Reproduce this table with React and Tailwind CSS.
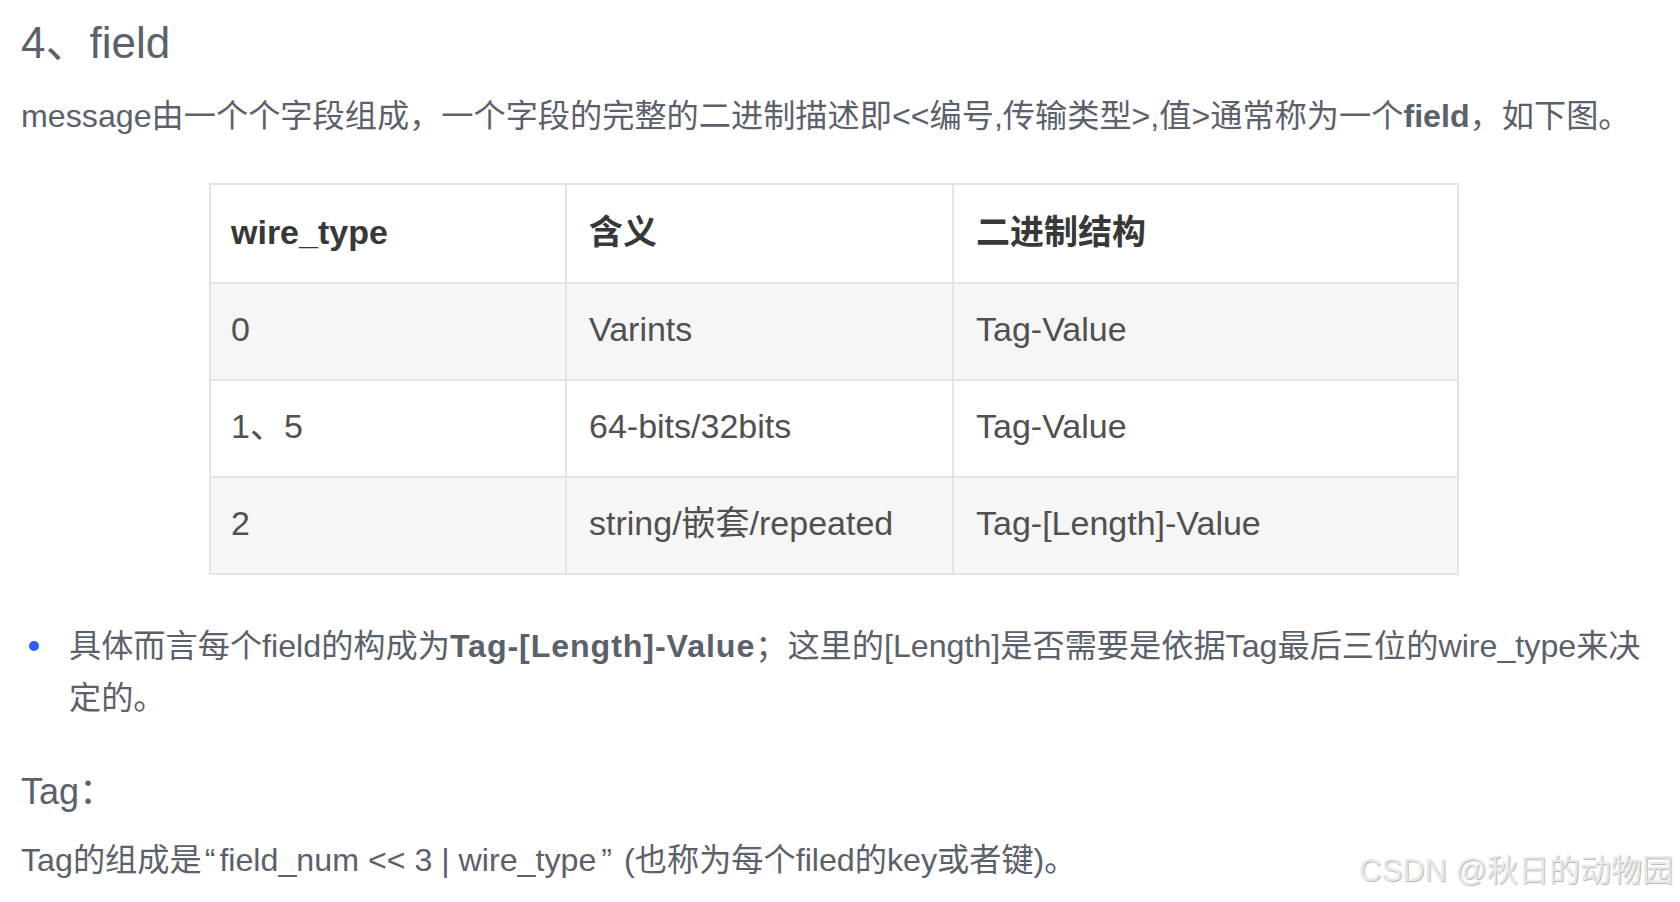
const rows = [
  { type: "0", meaning: "Varints", struct: "Tag-Value" },
  { type: "1、5", meaning: "64-bits/32bits", struct: "Tag-Value" },
  { type: "2", meaning: "string/嵌套/repeated", struct: "Tag-[Length]-Value" },
];

const sans = "font-['Liberation_Sans','Noto_Sans_CJK_SC',sans-serif]";

const App = () => {
  return (
    <div className={`relative min-h-[902px] bg-white text-[#5b616b] ${sans}`}>
      <div className="px-[21px] pt-[13px]">
        <h1 className="text-[44px] leading-[60px] font-normal">4、field</h1>

        <p className="mt-[17px] text-[32.2px] leading-[52px]">
          message由一个个字段组成，一个字段的完整的二进制描述即&lt;&lt;编号,传输类型&gt;,值&gt;通常称为一个
          <b className="font-bold">field</b>，如下图。
        </p>

        <table className="mt-[41px] ml-[188px] border-collapse border-2 border-[#e4e4e4] text-[34px] text-[#505050]">
          <thead>
            <tr className="h-[99px] bg-white">
              <th className="w-[356px] border-2 border-[#e4e4e4] pl-[20px] pb-[3px] text-left font-bold text-[#383838]">
                wire_type
              </th>
              <th className="w-[387px] border-2 border-[#e4e4e4] pl-[22px] pb-[3px] text-left font-bold text-[#383838]">
                含义
              </th>
              <th className="w-[505px] border-2 border-[#e4e4e4] pl-[22px] pb-[3px] text-left font-bold text-[#383838]">
                二进制结构
              </th>
            </tr>
          </thead>
          <tbody>
            {rows.map((row, i) => (
              <tr
                key={row.type}
                className={`h-[97px] ${i % 2 === 0 ? "bg-[#f6f6f6]" : "bg-white"}`}
              >
                <td className="border-2 border-[#e4e4e4] pl-[20px] pb-[4px]">{row.type}</td>
                <td className="border-2 border-[#e4e4e4] pl-[22px] pb-[4px]">{row.meaning}</td>
                <td className="border-2 border-[#e4e4e4] pl-[22px] pb-[4px]">{row.struct}</td>
              </tr>
            ))}
          </tbody>
        </table>

        <ul className="mt-[45px] text-[32.2px] leading-[52px]">
          <li className="flex">
            <span className="mt-[21px] ml-[8px] mr-[30px] h-[10px] w-[10px] shrink-0 rounded-full bg-[#2b5df0]"></span>
            <p>
              具体而言每个field的构成为<b className="font-bold tracking-[0.9px]">Tag-[Length]-Value</b>；这里的[Length]是否需要是依据Tag最后三位的wire_type来决定的。
            </p>
          </li>
        </ul>

        <h2 className="mt-[42px] text-[36px] leading-[52px] font-normal">Tag：</h2>

        <p className="mt-[16px] text-[32.2px] leading-[52px]">
          Tag的组成是<span className="pl-[3px] pr-[4px]">“</span>field_num &lt;&lt; 3 | wire_type<span className="pl-[5px] pr-[12px]">”</span>(也称为每个filed的key或者键)。
        </p>
      </div>

      {/* watermark */}
      <div className="absolute right-[7px] top-[848px] text-[31px] leading-[46px] text-[#e8e8e8] [text-shadow:1px_1px_1px_#b4b4b4]">
        CSDN @秋日的动物园
      </div>
    </div>
  );
};

export default App;
